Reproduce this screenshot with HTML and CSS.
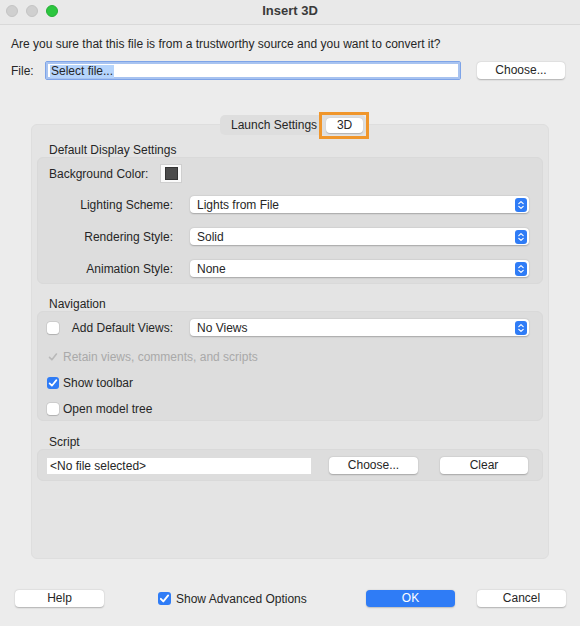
FILE: index.html
```html
<!DOCTYPE html>
<html lang="en">
<head>
<meta charset="utf-8">
<title>Insert 3D</title>
<link rel="stylesheet" href="styles.css">
</head>
<body>
<div class="window">
  <div class="titlebar">
    <div class="lights">
      <span class="light grey"></span>
      <span class="light grey"></span>
      <span class="light green"></span>
    </div>
    <div class="title">Insert 3D</div>
  </div>

  <div class="prompt">Are you sure that this file is from a trustworthy source and you want to convert it?</div>

  <div class="file-row">
    <span class="file-label">File:</span>
    <div class="file-input"><span class="selected">Select file...</span></div>
    <button class="btn choose-top">Choose...</button>
  </div>

  <div class="tabs">
    <div class="segmented">
      <span class="seg-item">Launch Settings</span>
      <span class="seg-item active">3D</span>
    </div>
  </div>

  <div class="panel">
    <div class="section-label">Default Display Settings</div>
    <div class="group display">
      <div class="bg-row">
        <span>Background Color:</span>
        <span class="well"><span class="swatch"></span></span>
      </div>
      <div class="select-grid">
        <span class="label">Lighting Scheme:</span>
        <div class="select"><span>Lights from File</span><svg class="stepper" viewBox="0 0 12 14"><rect width="12" height="14" rx="3" fill="#2f7cf6"/><path d="M3.8 5.6 6 3.6 8.2 5.6M3.8 8.4 6 10.4 8.2 8.4" fill="none" stroke="#fff" stroke-width="1.2" stroke-linecap="round" stroke-linejoin="round"/></svg></div>
        <span class="label">Rendering Style:</span>
        <div class="select"><span>Solid</span><svg class="stepper" viewBox="0 0 12 14"><rect width="12" height="14" rx="3" fill="#2f7cf6"/><path d="M3.8 5.6 6 3.6 8.2 5.6M3.8 8.4 6 10.4 8.2 8.4" fill="none" stroke="#fff" stroke-width="1.2" stroke-linecap="round" stroke-linejoin="round"/></svg></div>
        <span class="label">Animation Style:</span>
        <div class="select"><span>None</span><svg class="stepper" viewBox="0 0 12 14"><rect width="12" height="14" rx="3" fill="#2f7cf6"/><path d="M3.8 5.6 6 3.6 8.2 5.6M3.8 8.4 6 10.4 8.2 8.4" fill="none" stroke="#fff" stroke-width="1.2" stroke-linecap="round" stroke-linejoin="round"/></svg></div>
      </div>
    </div>

    <div class="section-label nav-label">Navigation</div>
    <div class="group nav">
      <div class="views-row">
        <span class="cb"></span>
        <span class="views-label"><span>Add Default Views:</span></span>
        <div class="select views"><span>No Views</span><svg class="stepper" viewBox="0 0 12 14"><rect width="12" height="14" rx="3" fill="#2f7cf6"/><path d="M3.8 5.6 6 3.6 8.2 5.6M3.8 8.4 6 10.4 8.2 8.4" fill="none" stroke="#fff" stroke-width="1.2" stroke-linecap="round" stroke-linejoin="round"/></svg></div>
      </div>
      <div class="check-row disabled first">
        <span class="cb ghost"><svg viewBox="0 0 12 12"><path d="M2.5 6.4 4.9 8.8 9.4 3" fill="none" stroke="#b9b9b9" stroke-width="1.6" stroke-linecap="round" stroke-linejoin="round"/></svg></span>
        <span>Retain views, comments, and scripts</span>
      </div>
      <div class="check-row">
        <span class="cb on"><svg viewBox="0 0 12 12"><path d="M2.6 6.3 4.9 8.7 9.4 3.1" fill="none" stroke="#fff" stroke-width="1.7" stroke-linecap="round" stroke-linejoin="round"/></svg></span>
        <span>Show toolbar</span>
      </div>
      <div class="check-row">
        <span class="cb"></span>
        <span>Open model tree</span>
      </div>
    </div>

    <div class="section-label script-label">Script</div>
    <div class="group script">
      <div class="script-input">&lt;No file selected&gt;</div>
      <button class="btn script-choose">Choose...</button>
      <button class="btn script-clear">Clear</button>
    </div>
  </div>

  <div class="bottom-row">
    <button class="btn">Help</button>
    <label class="adv">
      <span class="cb on"><svg viewBox="0 0 12 12"><path d="M2.6 6.3 4.9 8.7 9.4 3.1" fill="none" stroke="#fff" stroke-width="1.7" stroke-linecap="round" stroke-linejoin="round"/></svg></span>
      <span>Show Advanced Options</span>
    </label>
    <button class="btn primary">OK</button>
    <button class="btn cancel">Cancel</button>
  </div>
</div>
</body>
</html>
```

FILE: styles.css
```css
* { box-sizing: border-box; }

html, body {
  margin: 0;
  padding: 0;
}

body {
  width: 580px;
  height: 626px;
  background: #ececec;
  font-family: "Liberation Sans", Arial, sans-serif;
  font-size: 12px;
  color: #262626;
  overflow: hidden;
}

.window {
  width: 580px;
  height: 626px;
  display: flex;
  flex-direction: column;
}

.titlebar {
  height: 25px;
  flex: none;
  display: grid;
  grid-template-columns: 1fr auto 1fr;
  align-items: center;
  background: #e9e9e9;
  border-bottom: 1px solid #d9d9d9;
}

.lights {
  grid-column: 1;
  grid-row: 1;
  display: flex;
  gap: 8px;
  padding-left: 6px;
  padding-bottom: 2px;
}

.light {
  width: 12px;
  height: 12px;
  border-radius: 50%;
}
.light.grey { background: #cfcfcf; border: 1px solid #c4c4c4; }
.light.green { background: #2cc63f; border: 1px solid #25ae35; }

.title {
  grid-column: 2;
  grid-row: 1;
  font-weight: bold;
  font-size: 13px;
  color: #3a3a3a;
  padding-bottom: 3px;
}

.prompt {
  margin: 12px 0 0 11px;
  line-height: 14px;
  white-space: nowrap;
}

.file-row {
  margin-top: 10px;
  display: flex;
  align-items: center;
  padding-left: 11px;
  height: 19px;
}

.file-label {
  width: 34px;
}

.file-input {
  width: 416px;
  height: 19px;
  background: #fff;
  border: 1px solid #7ea4e8;
  box-shadow: 0 0 0 2px #a8c3f0 inset;
  border-radius: 2px;
  padding: 3px 0 0 4px;
  line-height: 12px;
}

.selected {
  background: #b5d4fc;
  padding: 0 1px;
  display: inline-block;
  line-height: 13px;
}

.btn {
  font-family: inherit;
  font-size: 12px;
  color: #262626;
  background: #fff;
  border: none;
  border-radius: 4px;
  height: 17px;
  width: 89px;
  padding: 0;
  line-height: 17px;
  box-shadow: 0 0.5px 1.5px rgba(0, 0, 0, 0.25);
}

.choose-top {
  margin-left: 16px;
  width: 88px;
}

.tabs {
  margin-top: 35px;
  margin-bottom: -11px;
  display: flex;
  padding-left: 220px;
  position: relative;
  z-index: 1;
}

.segmented {
  display: flex;
  align-items: center;
  height: 20px;
  background: #dedede;
  border-radius: 5px;
  padding: 3px 3px 2px 0;
}

.seg-item {
  padding: 0 9px 0 11px;
  line-height: 15px;
}

.seg-item.active {
  position: relative;
  background: #fff;
  border-radius: 4px;
  width: 37px;
  height: 15px;
  padding: 0;
  text-align: center;
  box-shadow: 0 0.5px 1px rgba(0, 0, 0, 0.2);
}

.seg-item.active::after {
  content: "";
  position: absolute;
  left: -7px;
  right: -6px;
  top: -6px;
  bottom: -6px;
  border: 3px solid #f0962b;
}

.panel {
  flex: none;
  margin: 0 31px;
  height: 435px;
  background: #e4e4e4;
  border: 1px solid #dedede;
  border-radius: 6px;
  padding: 18px 5px 0 5px;
}

.section-label {
  line-height: 14px;
  padding-left: 12px;
}

.group {
  background: #dddddd;
  border: 1px solid #d9d9d9;
  border-radius: 6px;
}

.display {
  padding: 6px 13px 6px 11px;
}

.bg-row {
  display: flex;
  align-items: center;
  height: 19px;
}

.well {
  margin-left: 12px;
  width: 22px;
  height: 19px;
  background: #fafafa;
  border: 1px solid #cfcfcf;
  display: flex;
  align-items: center;
  justify-content: center;
}

.swatch {
  width: 13px;
  height: 13px;
  background: #4b4b4b;
  border: 1px solid #333;
}

.select-grid {
  margin-top: 13px;
  display: grid;
  grid-template-columns: 124px 339px;
  column-gap: 17px;
  row-gap: 15px;
  align-items: center;
}

.label {
  text-align: right;
  white-space: nowrap;
}

.select {
  height: 17px;
  background: #fff;
  border-radius: 4px;
  box-shadow: 0 0.5px 1.5px rgba(0, 0, 0, 0.25);
  display: flex;
  align-items: center;
  justify-content: space-between;
  padding: 0 2px 0 7px;
}

.stepper {
  width: 12px;
  height: 14px;
  display: block;
}

.nav-label {
  margin-top: 13px;
}

.nav {
  padding: 7px 13px 3px 9px;
}

.views-row {
  display: flex;
  align-items: center;
  height: 17px;
}

.cb {
  width: 12px;
  height: 12px;
  flex: none;
  background: #fff;
  border-radius: 3px;
  box-shadow: 0 0 0 0.5px rgba(0, 0, 0, 0.12), 0 0.5px 1px rgba(0, 0, 0, 0.15);
  display: flex;
}

.cb svg {
  width: 12px;
  height: 12px;
  display: block;
}

.cb.on {
  background: #2f7cf6;
  box-shadow: none;
}

.cb.ghost {
  background: transparent;
  box-shadow: none;
}

.views-label {
  width: 98px;
  flex: none;
  margin-left: 16px;
  display: flex;
  justify-content: flex-end;
  white-space: nowrap;
}

.select.views {
  margin-left: 17px;
  width: 339px;
}

.check-row {
  display: flex;
  align-items: center;
  gap: 4px;
  height: 16px;
  margin-top: 10px;
}

.check-row.first {
  margin-top: 13px;
}

.check-row.disabled {
  color: #a9a9a9;
}

.script-label {
  margin-top: 14px;
}

.script {
  display: flex;
  align-items: center;
  height: 32px;
  padding: 1px 0 0 9px;
}

.script-input {
  width: 264px;
  height: 16px;
  background: #fff;
  line-height: 16px;
  padding-left: 3px;
}

.script-choose {
  margin-left: 18px;
}

.script-clear {
  margin-left: 22px;
  width: 88px;
}

.bottom-row {
  margin-top: 31px;
  display: flex;
  align-items: center;
  padding: 0 14px 0 15px;
}

.adv {
  margin-left: 54px;
  display: flex;
  align-items: center;
  gap: 5px;
}

.adv .cb {
  width: 13px;
  height: 13px;
}
.adv .cb svg { width: 13px; height: 13px; }

.btn.primary {
  margin-left: auto;
  background: #2f7cf6;
  color: #fff;
  box-shadow: 0 0.5px 1.5px rgba(0, 0, 0, 0.2);
}

.btn.cancel {
  margin-left: 22px;
}
```
